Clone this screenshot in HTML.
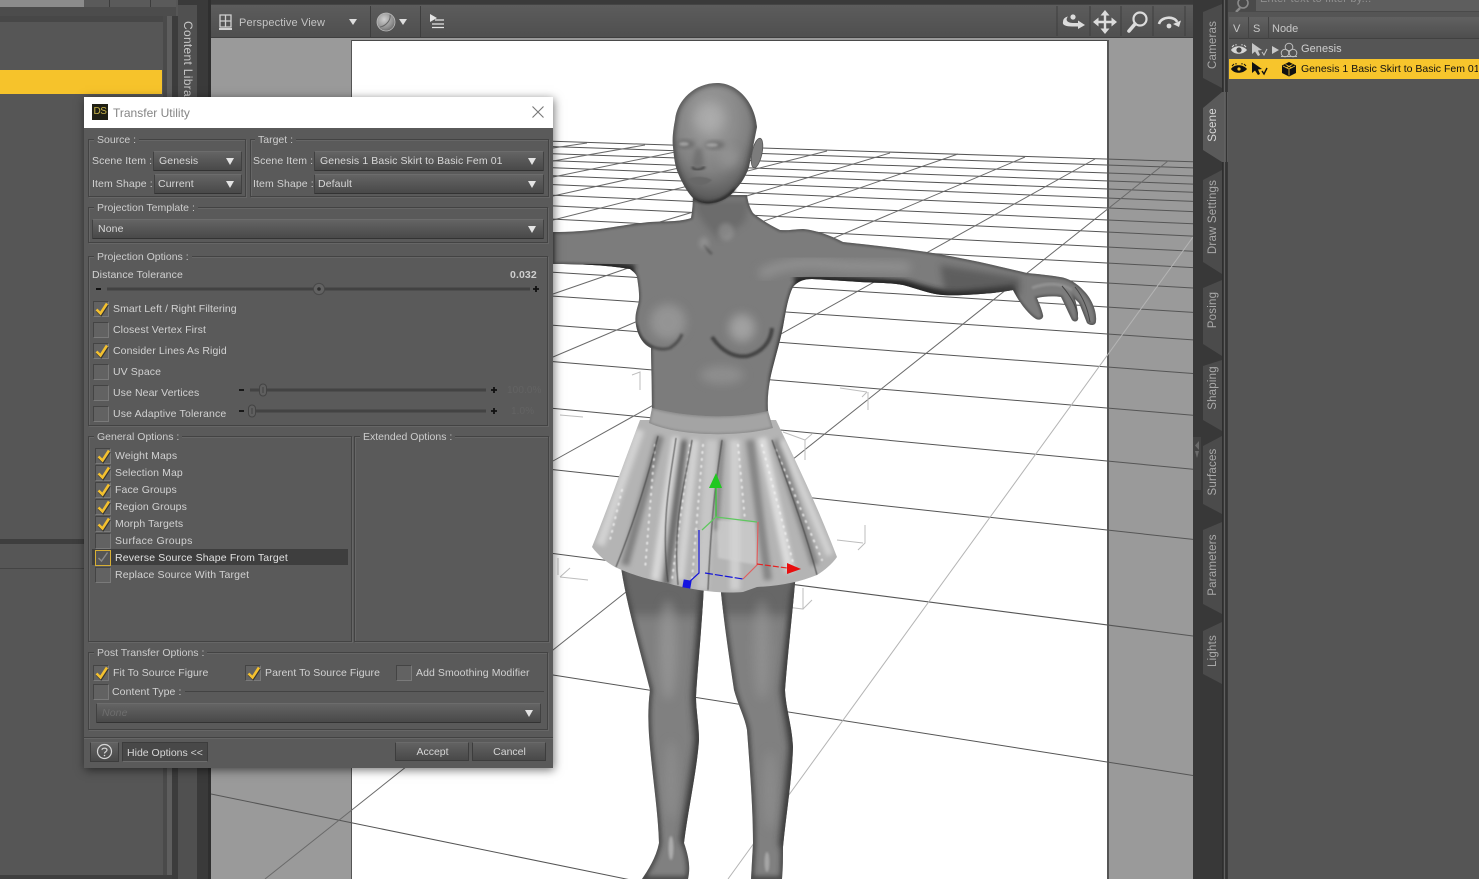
<!DOCTYPE html>
<html><head><meta charset="utf-8"><title>Transfer Utility</title>
<style>
html,body{margin:0;padding:0;width:1479px;height:879px;overflow:hidden;background:#3a3a3a}
body{position:relative;font-family:"Liberation Sans",sans-serif;font-size:11px;color:#cfcfcf}
.a{position:absolute}
.t{position:absolute;white-space:nowrap;line-height:14px;height:14px;margin-top:1px;font-size:10.5px;color:#d2d2d2;letter-spacing:.1px}
.g{position:absolute;border:1px solid #434343;box-shadow:1px 1px 0 #666,inset 1px 1px 0 #666;box-sizing:border-box}
.lg{position:absolute;white-space:nowrap;background:#5a5a5a;padding:0 3px;line-height:12px;height:12px;margin-top:1px;font-size:10.5px;color:#cdcdcd;letter-spacing:0}
.c{position:absolute;box-sizing:border-box;height:20px;background:linear-gradient(#646464,#494949);border:1px solid #414141;border-top-color:#6c6c6c;border-bottom-color:#333;border-radius:1px;line-height:18.5px;font-size:10.5px;color:#d8d8d8;padding-left:5px;white-space:nowrap;letter-spacing:.11px}
.c:after{content:"";position:absolute;right:7px;top:6px;border-left:4px solid transparent;border-right:4px solid transparent;border-top:7px solid #e4e4e4}
.b{position:absolute;width:16px;height:16px;box-sizing:border-box;border:1px solid #444;border-right-color:#7a7a7a;border-bottom-color:#7a7a7a;background:#626262}
.b svg{position:absolute;left:0;top:-1px;overflow:visible}
.btn{position:absolute;box-sizing:border-box;height:20px;background:linear-gradient(#626262,#494949);border:1px solid #3d3d3d;border-top-color:#6a6a6a;text-align:center;line-height:20px;color:#d6d6d6;font-size:10.5px}
.tab{position:absolute;white-space:nowrap;font-size:11.5px;color:#a9a9a9;line-height:14px;letter-spacing:.2px;transform:translate(-50%,-50%) rotate(-90deg)}
</style></head><body>

<!-- left panel -->
<div class="a" style="left:0;top:0;width:178px;height:879px;background:#565656"></div>
<div class="a" style="left:0;top:0;width:84px;height:7px;background:#8c8c8c"></div>
<div class="a" style="left:84px;top:0;width:92px;height:7px;background:#5a5a5a"></div>
<div class="a" style="left:109px;top:0;width:1px;height:7px;background:#3c3c3c"></div>
<div class="a" style="left:150px;top:0;width:1px;height:7px;background:#3c3c3c"></div>
<div class="a" style="left:0;top:7px;width:176px;height:9px;background:#4c4c4c"></div>
<div class="a" style="left:0;top:16px;width:163px;height:6px;background:#474747"></div>
<div class="a" style="left:163px;top:16px;width:4px;height:863px;background:#4a4a4a"></div>
<div class="a" style="left:167px;top:16px;width:5px;height:863px;background:#5e5e5e"></div>
<div class="a" style="left:172px;top:16px;width:6px;height:863px;background:#3c3c3c"></div>
<div class="a" style="left:0;top:70px;width:162px;height:24px;background:#f6c32b"></div>
<div class="a" style="left:0;top:539px;width:163px;height:5px;background:#3e3e3e"></div>
<div class="a" style="left:0;top:568px;width:163px;height:1px;background:#444"></div>
<div class="a" style="left:0;top:875px;width:172px;height:4px;background:#3f3f3f"></div>

<!-- tab strip left -->
<div class="a" style="left:178px;top:0;width:33px;height:879px;background:#3a3a3a"></div>
<div class="a" style="left:178px;top:5px;width:19px;height:874px;background:#505050"></div>
<div class="a" style="left:208px;top:0;width:3px;height:879px;background:#2f2f2f"></div>
<div class="a" style="left:188px;top:21px;white-space:nowrap;font-size:12px;color:#c8c8c8;line-height:14px;letter-spacing:.3px;transform-origin:0 0;transform:rotate(90deg) translate(0,-7px)">Content Library</div>

<!-- viewport -->
<div class="a" style="left:211px;top:0;width:982px;height:879px;background:#9a9a9a"></div>
<div class="a" style="left:352px;top:41px;width:755px;height:838px;background:#fff"></div>
<div class="a" style="left:351px;top:40px;width:757px;height:1px;background:#4a4a4a"></div>
<div class="a" style="left:351px;top:40px;width:1px;height:839px;background:#555"></div>
<div class="a" style="left:1107px;top:40px;width:2px;height:839px;background:#555"></div>

<!-- 3D scene -->
<svg class="a" style="left:0;top:0" width="1479" height="879" viewBox="0 0 1479 879">
<defs>
<clipPath id="vp"><rect x="211" y="38" width="982" height="841"/></clipPath>
<filter id="b0" x="-30%" y="-30%" width="160%" height="160%"><feGaussianBlur stdDeviation=".5"/></filter>
<filter id="b1" x="-30%" y="-30%" width="160%" height="160%"><feGaussianBlur stdDeviation="1"/></filter>
<filter id="b2" x="-30%" y="-30%" width="160%" height="160%"><feGaussianBlur stdDeviation="2.5"/></filter>
<filter id="b3" x="-30%" y="-30%" width="160%" height="160%"><feGaussianBlur stdDeviation="3.5"/></filter>
<filter id="b4" x="-50%" y="-50%" width="200%" height="200%"><feGaussianBlur stdDeviation="5"/></filter>
<path id="torso" d="M693 195C693 205 692 212 691 218C680 222 665 221 650 222C630 224 615 227 600 229C585 231 570 232 553 232L553 264C580 264 605 265 630 269C634 272 636 274 637 277C639 290 640 298 638 305C635 315 635 320 636 325C638 337 644 345 651 348C651 360 652 385 652 425L770 425C766 405 768 390 771 375C775 358 780 342 783 327C786 310 788 297 793 287C798 281 804 279 812 279C830 280 845 281 860 282C880 283 892 283 903 285C918 289 930 294 943 295C960 296 978 294 993 293C1000 292 1008 291 1013 290C1019 302 1028 314 1036 319C1040 321 1044 318 1043 315C1042 310 1039 303 1037 298C1045 296 1055 296 1061 297C1065 305 1069 314 1072 320C1075 323 1079 321 1078 317C1078 312 1077 306 1075 299L1079 303C1082 310 1085 318 1087 323C1090 326 1096 326 1096 321C1097 312 1092 299 1084 291C1077 283 1068 278 1060 277C1048 275 1037 274 1027 273C1015 270 1005 268 993 265C972 260 950 256 927 252C900 248 870 245 843 242C830 235 815 230 803 229C795 229 787 231 780 230C770 225 760 219 753 213C750 208 748 203 747 195Z"/>
<path id="head" d="M717 83C695 83 677 100 675 120C673 130 672 140 673 147C674 158 675 166 678 173C683 185 688 193 693 198C700 203 706 204 712 203C722 202 730 197 735 190C741 184 746 176 749 167L757 127C755 103 738 83 717 83Z"/>
<path id="legs" d="M620 560C625 600 640 650 650 690C648 705 648 720 649 735C652 775 658 810 659 843C656 858 648 870 642 879L688 879C690 870 690 860 684 843C688 810 697 770 699 740C699 725 696 710 696 697C698 660 703 620 705 560ZM718 560C722 610 728 650 734 690C738 705 745 718 747 730C750 770 753 810 753 843L751 879L782 879C783 868 783 858 783 847C786 815 792 780 793 747C792 725 786 710 785 690C788 650 793 610 797 560Z"/>
<path id="skirt" d="M640 420C625 460 607 510 592 547C598 555 606 562 615 567C632 575 650 580 667 583C690 590 720 594 743 592L757 587C780 586 800 582 817 575C825 570 832 564 837 557C815 500 795 460 776 420Z"/>
<path id="band" d="M652 408C690 418 735 419 768 411L773 428C740 437 680 437 649 423Z"/>
<clipPath id="cTorso"><use href="#torso"/></clipPath>
<clipPath id="cHead"><use href="#head"/></clipPath>
<clipPath id="cLegs"><use href="#legs"/></clipPath>
<clipPath id="cSkirt"><use href="#skirt"/></clipPath>
<clipPath id="cBand"><use href="#band"/></clipPath>
<radialGradient id="hg" cx=".45" cy=".3" r=".72"><stop offset="0" stop-color="#a2a2a2"/><stop offset=".6" stop-color="#828282"/><stop offset="1" stop-color="#505050"/></radialGradient>
</defs>
<g clip-path="url(#vp)">
<!-- cross grid lines -->
<g stroke="#555" stroke-width="1" fill="none">
<path d="M553 141.3L1193 161.8M553 146.6L1193 167.9M553 153.7L1193 176M553 160.7L1193 184.1M553 167.8L1193 192.3M553 175.8L1193 201.4M553 184.6L1193 211.6M553 195.2L1193 223.8M553 205.9L1193 236.1M553 219.1L1193 251.3M553 233.3L1193 267.6M553 251L1193 288M553 272.2L1193 312.4M553 296.1L1193 339.9M553 325.3L1193 373.5M553 361.6L1193 415.2M553 408.4L1193 469.2M553 469.6L1193 539.4M553 553.5L1193 636M553 675L1193 775.5M211 794L631 880"/>
</g>
<!-- depth grid lines -->
<g stroke="#6a6a6a" stroke-width="1" fill="none">
<path d="M1168 161L265 879M1095 159L553 461M1025 157L553 357M958 154L553 294M890 153L553 254M827 151L553 220M760 150L553 196M690 149L553 177M645 145L553 161M587 143L553 148"/>
</g>
<path d="M1193 237L728 879" stroke="#b4b4b4" fill="none"/>
<!-- ghost brackets -->
<g stroke="#bdbdbd" fill="none">
<path d="M840 388L867 392M868 392V410M867 392L862 397"/>
<path d="M783 432L805 440M805 440V460M805 440L812 434"/>
<path d="M837 540L863 543M865 525V543L858 550"/>
<path d="M770 605L803 609V588M803 609L812 600"/>
<path d="M560 577L588 580M560 577L570 568M558 558V575"/>
<path d="M560 415L583 417M632 375L640 372V390"/>
</g>

<!-- legs -->
<use href="#legs" fill="#808080"/>
<g clip-path="url(#cLegs)">
<use href="#legs" fill="none" stroke="#2c2c2c" stroke-width="5" filter="url(#b2)" opacity=".7"/>
<path d="M704 590L696 697L699 740L684 843M796 590L785 690L793 747L783 847" stroke="#333" stroke-width="10" fill="none" filter="url(#b3)" opacity=".6"/>
<rect x="620" y="560" width="180" height="55" fill="#4a4a4a" opacity=".45" filter="url(#b4)"/>
<ellipse cx="668" cy="650" rx="9" ry="50" fill="#a0a0a0" opacity=".55" filter="url(#b4)"/>
<ellipse cx="762" cy="650" rx="9" ry="50" fill="#9c9c9c" opacity=".5" filter="url(#b4)"/>
<ellipse cx="671" cy="780" rx="7" ry="40" fill="#a0a0a0" opacity=".35" filter="url(#b4)"/>
<ellipse cx="770" cy="790" rx="7" ry="40" fill="#a0a0a0" opacity=".35" filter="url(#b4)"/>
<ellipse cx="671" cy="848" rx="2.5" ry="12" fill="#c0c0c0" opacity=".7" filter="url(#b1)"/>
<ellipse cx="767" cy="862" rx="2.5" ry="10" fill="#c0c0c0" opacity=".6" filter="url(#b1)"/>
</g>

<!-- torso and arms -->
<ellipse cx="757" cy="153" rx="5" ry="15" fill="#7c7c7c" stroke="#555" stroke-width=".8" transform="rotate(12 757 153)"/>
<use href="#torso" fill="#7c7c7c"/>
<g clip-path="url(#cTorso)">
<use href="#torso" fill="none" stroke="#3a3a3a" stroke-width="3.5" filter="url(#b1)" opacity=".55"/>
<path d="M553 266C580 266 605 267 634 272" stroke="#222" stroke-width="15" fill="none" filter="url(#b2)" opacity=".9"/>
<path d="M795 283C810 280 860 284 903 287C918 291 930 296 943 297C960 298 978 296 1015 292" stroke="#222" stroke-width="15" fill="none" filter="url(#b2)" opacity=".9"/>
<path d="M940 265L1020 278L1020 295L945 292Z" fill="#4c4c4c" opacity=".6" filter="url(#b3)"/>
<path d="M760 275C785 262 810 262 835 265C870 268 890 265 910 268" stroke="#a2a2a2" stroke-width="10" fill="none" filter="url(#b4)" opacity=".6"/>
<path d="M692 200C696 212 700 222 720 240L745 222L750 200Z" fill="#5d5d5d" opacity=".5" filter="url(#b3)"/>
<path d="M704 245C708 250 709 252 712 254" stroke="#5c5c5c" stroke-width="2.5" fill="none" filter="url(#b1)"/>
<ellipse cx="726" cy="232" rx="8" ry="9" fill="#aaa" opacity=".4" filter="url(#b2)"/>
<ellipse cx="704" cy="243" rx="5" ry="6" fill="#aaa" opacity=".4" filter="url(#b2)"/>
<ellipse cx="668" cy="322" rx="18" ry="18" fill="#a2a2a2" opacity=".65" filter="url(#b4)"/>
<ellipse cx="742" cy="328" rx="13" ry="14" fill="#adadad" opacity=".75" filter="url(#b4)"/>
<path d="M712 337C722 352 735 358 748 356C762 352 771 342 772 328" stroke="#333" stroke-width="4" fill="none" filter="url(#b1)" opacity=".75"/>
<path d="M636 325C640 345 658 352 670 348C676 344 680 340 682 334" stroke="#3a3a3a" stroke-width="3" fill="none" filter="url(#b1)" opacity=".7"/>
<ellipse cx="722" cy="375" rx="22" ry="9" fill="#999" opacity=".65" filter="url(#b4)"/>
<path d="M793 287L780 335L770 380L782 380L806 287Z" fill="#383838" opacity=".85" filter="url(#b2)"/>
<path d="M1032 288C1045 283 1060 282 1072 290" stroke="#a4a4a4" stroke-width="3" fill="none" filter="url(#b1)" opacity=".6"/>
<path d="M1062 286C1070 295 1076 305 1079 318M1075 287C1083 297 1088 310 1090 322" stroke="#444" stroke-width="1" fill="none"/>
</g>

<!-- head -->
<use href="#head" fill="url(#hg)"/>
<g clip-path="url(#cHead)">
<use href="#head" fill="none" stroke="#333" stroke-width="4" filter="url(#b2)" opacity=".7"/>
<ellipse cx="709" cy="118" rx="15" ry="15" fill="#b4b4b4" opacity=".55" filter="url(#b4)"/>
<ellipse cx="686" cy="144" rx="9" ry="4" fill="#606060" opacity=".7" filter="url(#b2)"/>
<ellipse cx="715" cy="145" rx="10" ry="4" fill="#606060" opacity=".7" filter="url(#b2)"/>
<ellipse cx="684" cy="144" rx="5" ry="2" fill="#a0a0a0" filter="url(#b1)"/>
<ellipse cx="712" cy="145" rx="6" ry="2" fill="#a0a0a0" filter="url(#b1)"/>
<path d="M695 148L692 165L697 169L704 165L702 148" fill="#5f5f5f" opacity=".5" filter="url(#b2)"/>
<path d="M692 167C695 171 700 170 705 167" stroke="#3d3d3d" stroke-width="2" fill="none" filter="url(#b1)"/>
<path d="M687 179C696 176 705 176 712 180C705 187 694 187 687 179Z" fill="#686868" filter="url(#b0)"/>
<path d="M688 179.5H711" stroke="#404040" stroke-width="1" filter="url(#b0)"/>
<ellipse cx="730" cy="158" rx="10" ry="10" fill="#a5a5a5" opacity=".4" filter="url(#b4)"/>
</g>
<path d="M693 199C705 206 720 204 735 189" stroke="#222" stroke-width="2" fill="none" filter="url(#b1)" opacity=".8"/>

<!-- skirt -->
<use href="#skirt" fill="#b4b4b4"/>
<g clip-path="url(#cSkirt)">
<g fill="none" filter="url(#b2)">
<path d="M640 430L600 545" stroke="#d2d2d2" stroke-width="9"/>
<path d="M660 436L625 565" stroke="#818181" stroke-width="8"/>
<path d="M676 437L655 580" stroke="#d8d8d8" stroke-width="8"/>
<path d="M684 440L666 585" stroke="#696969" stroke-width="7"/>
<path d="M695 440L680 580" stroke="#d2d2d2" stroke-width="8"/>
<path d="M712 440L702 590" stroke="#c6c6c6" stroke-width="12"/>
<path d="M735 440L735 590" stroke="#cfcfcf" stroke-width="10"/>
<path d="M722 440L716 530" stroke="#777" stroke-width="4"/>
<path d="M750 440L768 580" stroke="#858585" stroke-width="8"/>
<path d="M762 438L790 572" stroke="#dcdcdc" stroke-width="9"/>
<path d="M776 440L815 565" stroke="#858585" stroke-width="8"/>
<path d="M782 440L830 555" stroke="#d2d2d2" stroke-width="7"/>
</g>
<g stroke-linecap="round" stroke-dasharray="1 6" stroke="#f4f4f4" stroke-width="2.2" fill="none" opacity=".7" filter="url(#b0)">
<path d="M655 445L645 570"/><path d="M690 445L672 580"/><path d="M738 445L745 520"/><path d="M762 445L795 570"/><path d="M776 450L822 560"/><path d="M703 445L692 580"/><path d="M622 490L610 540"/>
</g>
<g stroke="#3a3a3a" fill="none" stroke-width=".9" filter="url(#b0)">
<path d="M658 436C650 470 635 520 616 567"/>
<path d="M676 438C672 470 660 520 668 582"/>
<path d="M692 440C686 480 672 520 678 585"/>
<path d="M722 440C718 470 712 500 708 590"/>
<path d="M772 440C790 490 805 530 817 575"/>
</g>
<polygon points="717,520 755,522 757,565 718,558" fill="#d4d4d4" opacity=".6" filter="url(#b1)"/>
</g>
<use href="#band" fill="#a4a4a4"/>
<g clip-path="url(#cBand)"><use href="#band" fill="none" stroke="#7c7c7c" stroke-width="2.5" filter="url(#b1)" opacity=".6"/></g>

<!-- gizmo -->
<g fill="none" stroke-width="1.2">
<path d="M716 487V517" stroke="#32c832"/>
<path d="M716 517L757 522M716 517L702 530" stroke="#5fc85f"/>
<path d="M699 530V573L687 584" stroke="#1414d8"/>
<path d="M705 573L743 579" stroke="#1414d8" stroke-dasharray="8 2"/>
<path d="M743 579L757 565L758 522" stroke="#e06060"/>
<path d="M757 564L787 568" stroke="#e62020" stroke-dasharray="6 2"/>
</g>
<polygon points="716,473 709,488 722,488" fill="#20c820"/>
<polygon points="787,563 787,574 801,569" fill="#e80e0e"/>
<rect x="683" y="580" width="8" height="8" fill="#1414e0" transform="rotate(10 687 584)"/>
</g>
</svg>

<!-- viewport toolbar -->
<div class="a" style="left:211px;top:0;width:982px;height:4px;background:#3a3a3a"></div>
<div class="a" style="left:211px;top:4px;width:982px;height:34px;background:linear-gradient(#5c5c5c,#4f4f4f);border-top:1px solid #444;box-sizing:border-box;border-bottom:1px solid #3f3f3f"></div>
<div class="a" style="left:370px;top:6px;width:1px;height:31px;background:#3e3e3e"></div>
<div class="a" style="left:420px;top:6px;width:1px;height:31px;background:#3e3e3e"></div>
<div class="t" style="left:239px;top:15px;font-size:11px;color:#c4c4c4;letter-spacing:.12px">Perspective View</div>
<svg class="a" style="left:211px;top:4px" width="982" height="34" viewBox="211 4 982 34">
<g fill="none" stroke="#d0d0d0" stroke-width="1.3"><path d="M220 15H231V27H220ZM225.5 15V27M220 21H231"/><path d="M219 29H232" stroke-width="2"/></g>
<polygon points="349,19 357,19 353,25" fill="#dedede"/>
<defs><radialGradient id="sph" cx=".4" cy=".35" r=".7"><stop offset="0" stop-color="#cfcfcf"/><stop offset=".7" stop-color="#8f8f8f"/><stop offset="1" stop-color="#666"/></radialGradient></defs>
<circle cx="386" cy="22" r="9" fill="url(#sph)" stroke="#bbb" stroke-width=".8"/>
<path d="M380 27C386 26 391 20 390 15" stroke="#666" fill="none"/>
<polygon points="399,19 407,19 403,25" fill="#dedede"/>
<polygon points="430,14 430,22 437,18" fill="#e4e4e4"/>
<path d="M435 20H444M432 24H444M432 27.5H444" stroke="#e4e4e4" stroke-width="1.2"/>
<path d="M1057 6V36M1090 6V36M1121 6V36M1153 6V36M1185 6V36" stroke="#3e3e3e"/>
<g fill="#dcdcdc" stroke="#dcdcdc">
<circle cx="1073" cy="17" r="2.6" stroke="none"/>
<path d="M1063 22C1063 18 1066 17 1068 16.5C1065 20 1067 23 1074 23L1078 23L1078 20.5L1085 25L1078 29L1078 26.5L1072 26.5C1066 26.5 1062 25 1063 22Z" stroke="none"/>
<path d="M1105 15V29M1098 22H1112" stroke-width="2.4" fill="none"/>
<polygon points="1105,10 1100.5,15.5 1109.5,15.5" stroke="none"/><polygon points="1105,34 1100.5,28.5 1109.5,28.5" stroke="none"/><polygon points="1093,22 1098.5,17.5 1098.5,26.5" stroke="none"/><polygon points="1117,22 1111.5,17.5 1111.5,26.5" stroke="none"/>
<circle cx="1140" cy="19" r="6.5" fill="none" stroke-width="2.2"/>
<path d="M1135 24L1129 31" stroke-width="3.6" fill="none" stroke-linecap="round"/>
<path d="M1159 24C1161 16 1175 16 1177 22" fill="none" stroke-width="2.6"/>
<polygon points="1173,24 1181,20.5 1179,27" stroke="none"/>
<circle cx="1169" cy="26" r="2.4" stroke="none"/>
</g>
</svg>

<!-- right side tabs -->
<div class="a" style="left:1193px;top:0;width:35px;height:879px;background:#383838"></div>
<svg class="a" style="left:1193px;top:0" width="35" height="879" viewBox="1193 0 35 879">
<g fill="#4b4b4b">
<path d="M1222 4L1203 12V78L1222 88Z"/>
<path d="M1222 170L1203 180V262L1222 274Z"/>
<path d="M1222 280L1203 288V344L1222 356Z"/>
<path d="M1222 360L1203 366V420L1222 431Z"/>
<path d="M1222 436L1203 446V504L1222 514Z"/>
<path d="M1222 522L1203 530V604L1222 614Z"/>
<path d="M1222 622L1203 631V674L1222 684Z"/>
</g>
<path d="M1222 92L1203 108V150L1222 162L1228 162V92Z" fill="#5a5a5a"/>
<path d="M1193 437H1201V490H1193Z" fill="#434343"/>
<polygon points="1199,441 1199,450 1195,445.5" fill="#6a6a6a"/><polygon points="1195,451 1199,451 1197,458" fill="#6a6a6a"/>
<path d="M1222.5 0V92M1222.5 162V879" stroke="#2e2e2e"/>
<path d="M1224.5 0V879" stroke="#606060"/>
<path d="M1226.5 0V879" stroke="#333"/>
</svg>
<div class="tab" style="left:1213px;top:45px">Cameras</div>
<div class="tab" style="left:1213px;top:125px;color:#d8d8d8">Scene</div>
<div class="tab" style="left:1213px;top:217px">Draw Settings</div>
<div class="tab" style="left:1213px;top:310px">Posing</div>
<div class="tab" style="left:1213px;top:388px">Shaping</div>
<div class="tab" style="left:1213px;top:472px">Surfaces</div>
<div class="tab" style="left:1213px;top:565px">Parameters</div>
<div class="tab" style="left:1213px;top:651px">Lights</div>

<!-- scene panel -->
<div class="a" style="left:1228px;top:0;width:251px;height:879px;background:#555"></div>
<div class="a" style="left:1228px;top:0;width:251px;height:12px;background:#4a4a4a"></div>
<div class="a" style="left:1256px;top:0;width:223px;height:11px;background:#5e5e5e;overflow:hidden"><div style="position:absolute;left:4px;top:-8px;font-size:11px;line-height:14px;color:#909090;letter-spacing:.2px;white-space:nowrap">Enter text to filter by...</div></div>
<svg class="a" style="left:1228px;top:0" width="28" height="12"><path d="M12 8L8 12" stroke="#8a8a8a" stroke-width="2.4"/><circle cx="15" cy="3" r="5" stroke="#8a8a8a" stroke-width="1.6" fill="none"/></svg>
<div class="a" style="left:1229px;top:17px;width:250px;height:22px;background:linear-gradient(#616161,#4e4e4e);border-bottom:1px solid #414141;box-sizing:border-box"></div>
<div class="a" style="left:1248px;top:17px;width:1px;height:22px;background:#434343"></div>
<div class="a" style="left:1268px;top:17px;width:1px;height:22px;background:#434343"></div>
<div class="t" style="left:1233px;top:21px;font-size:11px;color:#c8c8c8">V</div>
<div class="t" style="left:1253px;top:21px;font-size:11px;color:#c8c8c8">S</div>
<div class="t" style="left:1272px;top:21px;font-size:11px;color:#c8c8c8;letter-spacing:0">Node</div>
<div class="t" style="left:1301px;top:41px;font-size:11px;color:#cfcfcf;letter-spacing:.05px">Genesis</div>
<div class="a" style="left:1229px;top:59px;width:250px;height:20px;background:#f7c52c"></div>
<div class="t" style="left:1301px;top:61px;font-size:10.5px;color:#111;letter-spacing:0;width:177px;overflow:hidden">Genesis 1 Basic Skirt to Basic Fem 01</div>
<svg class="a" style="left:1229px;top:40px" width="72" height="42" viewBox="1229 39 72 42">
<g>
<path d="M1231 49C1234 44 1243 44 1247 49C1243 54 1234 54 1231 49Z" fill="#d5d5d5"/><circle cx="1239" cy="49" r="2.6" fill="#444"/><path d="M1232 46L1234 44M1236 44.5V43M1242 44.5V43M1246 46L1244 44" stroke="#d5d5d5"/>
<polygon points="1252,42 1252,53 1255,50.5 1258,55 1260,54 1258,49.5 1262,49" fill="#c6c6c6"/><path d="M1262 51L1264 54L1267 48" stroke="#c6c6c6" fill="none"/>
<polygon points="1272,45 1272,53 1279,49" fill="#c8c8c8"/>
<g fill="none" stroke="#bdbdbd"><circle cx="1289" cy="46" r="3.8"/><circle cx="1285" cy="52" r="3.8"/><circle cx="1293" cy="52" r="3.8"/><path d="M1281 55.5H1297"/></g>
</g>
<g transform="translate(0,-1)">
<path d="M1231 69C1234 64 1243 64 1247 69C1243 74 1234 74 1231 69Z" fill="#111"/><circle cx="1239" cy="69" r="1.6" fill="#f7c52c"/><path d="M1232 66L1234 64M1236 64.5V63M1242 64.5V63M1246 66L1244 64" stroke="#111"/>
<polygon points="1252,62 1252,73 1255,70.5 1258,75 1260,74 1258,69.5 1262,69" fill="#111"/><path d="M1262 71L1264 74L1267 68" stroke="#111" fill="none" stroke-width="1.4"/>
<path d="M1289 62L1296 65.5V73L1289 76.5L1282 73V65.5Z" fill="#111"/><path d="M1283 66L1289 69L1295 66M1289 69V75.5M1285.5 64.5L1292 68M1292.5 64.5L1286 68" stroke="#f7c52c" stroke-width=".8" fill="none"/>
</g>
</svg>

<!-- dialog -->
<div class="a" style="left:84px;top:97px;width:469px;height:671px;background:#5a5a5a;box-shadow:1px 2px 9px rgba(0,0,0,.55)">
<div class="a" style="left:0;top:0;width:469px;height:31px;background:#fff"></div>
</div>
<div class="a" style="left:92px;top:104px;width:16px;height:16px;background:#1f1f14;color:#c9b54a;font-size:10px;line-height:15px;text-align:center;letter-spacing:-.5px">DS</div>
<div class="t" style="left:113px;top:105px;font-size:12px;color:#858585;letter-spacing:0">Transfer Utility</div>
<svg class="a" style="left:532px;top:106px" width="12" height="12"><path d="M.5.5L11.5 11.5M11.5.5L.5 11.5" stroke="#777" stroke-width="1.1"/></svg>

<!-- groups -->
<div class="g" style="left:88px;top:139px;width:158px;height:58px"></div>
<div class="lg" style="left:94px;top:133px">Source :</div>
<div class="g" style="left:250px;top:139px;width:299px;height:58px"></div>
<div class="lg" style="left:255px;top:133px">Target :</div>
<div class="t" style="left:92px;top:153px">Scene Item :</div>
<div class="c" style="left:153px;top:151px;width:89px">Genesis</div>
<div class="t" style="left:92px;top:176px">Item Shape :</div>
<div class="c" style="left:154px;top:174px;width:88px;padding-left:3px">Current</div>
<div class="t" style="left:253px;top:153px">Scene Item :</div>
<div class="c" style="left:314px;top:151px;width:230px">Genesis 1 Basic Skirt to Basic Fem 01</div>
<div class="t" style="left:253px;top:176px">Item Shape :</div>
<div class="c" style="left:314px;top:174px;width:230px;padding-left:3px">Default</div>

<div class="g" style="left:88px;top:207px;width:460px;height:36px"></div>
<div class="lg" style="left:94px;top:201px">Projection Template :</div>
<div class="c" style="left:92px;top:219px;width:452px">None</div>

<div class="g" style="left:88px;top:256px;width:460px;height:170px"></div>
<div class="lg" style="left:94px;top:250px">Projection Options :</div>
<div class="t" style="left:92px;top:267px">Distance Tolerance</div>
<div class="t" style="left:510px;top:267px;font-weight:bold;color:#cfcfcf;font-size:10.5px">0.032</div>

<svg class="a" style="left:88px;top:280px" width="460" height="140" viewBox="88 280 460 140">
<path d="M96 289H101" stroke="#111" stroke-width="2"/>
<path d="M107 289H530" stroke="#424242" stroke-width="3"/>
<path d="M533 289H539M536 286V292" stroke="#111" stroke-width="1.8"/>
<circle cx="319" cy="289" r="5.6" fill="#626262" stroke="#484848"/><circle cx="319" cy="289" r="1.8" fill="#2e2e2e"/>
<path d="M239 390H244" stroke="#111" stroke-width="1.8"/>
<path d="M250 390H486" stroke="#434343" stroke-width="3"/>
<path d="M491 390H497M494 387V393" stroke="#111" stroke-width="1.8"/>
<rect x="259.5" y="384" width="7" height="12" rx="3.5" fill="#5f5f5f" stroke="#434343"/><path d="M263 387V393" stroke="#404040"/>
<path d="M239 411H244" stroke="#111" stroke-width="1.8"/>
<path d="M250 411H486" stroke="#434343" stroke-width="3"/>
<path d="M491 411H497M494 408V414" stroke="#111" stroke-width="1.8"/>
<rect x="248.5" y="405" width="7" height="12" rx="3.5" fill="#5f5f5f" stroke="#434343"/><path d="M252 408V414" stroke="#404040"/>
</svg>
<div class="t" style="left:507px;top:383px;color:#636363;font-size:10px">100.0%</div>
<div class="t" style="left:511px;top:404px;color:#636363;font-size:10px">1.0%</div>

<!-- projection checks -->
<div class="b" style="left:93px;top:301px"><svg width="16" height="16"><path d="M2.5 8.5L6.5 12.5L13 2.5" fill="none" stroke="#333" stroke-width="3" transform="translate(.5 1)"/><path d="M2.5 8.5L6.5 12.5L13 2.5" fill="none" stroke="#f3c02f" stroke-width="2.6"/></svg></div>
<div class="t" style="left:113px;top:301px;letter-spacing:.06px">Smart Left / Right Filtering</div>
<div class="b" style="left:93px;top:322px"></div>
<div class="t" style="left:113px;top:322px">Closest Vertex First</div>
<div class="b" style="left:93px;top:343px"><svg width="16" height="16"><path d="M2.5 8.5L6.5 12.5L13 2.5" fill="none" stroke="#333" stroke-width="3" transform="translate(.5 1)"/><path d="M2.5 8.5L6.5 12.5L13 2.5" fill="none" stroke="#f3c02f" stroke-width="2.6"/></svg></div>
<div class="t" style="left:113px;top:343px">Consider Lines As Rigid</div>
<div class="b" style="left:93px;top:364px"></div>
<div class="t" style="left:113px;top:364px">UV Space</div>
<div class="b" style="left:93px;top:385px"></div>
<div class="t" style="left:113px;top:385px">Use Near Vertices</div>
<div class="b" style="left:93px;top:406px"></div>
<div class="t" style="left:113px;top:406px;letter-spacing:.15px">Use Adaptive Tolerance</div>

<!-- general -->
<div class="g" style="left:88px;top:436px;width:264px;height:206px"></div>
<div class="lg" style="left:94px;top:430px">General Options :</div>
<div class="g" style="left:354px;top:436px;width:195px;height:206px"></div>
<div class="lg" style="left:360px;top:430px">Extended Options :</div>
<div class="a" style="left:92px;top:549px;width:256px;height:16px;background:#3e3e3e"></div>

<div class="b" style="left:95px;top:448px"><svg width="16" height="16"><path d="M2.5 8.5L6.5 12.5L13 2.5" fill="none" stroke="#333" stroke-width="3" transform="translate(.5 1)"/><path d="M2.5 8.5L6.5 12.5L13 2.5" fill="none" stroke="#f3c02f" stroke-width="2.6"/></svg></div>
<div class="t" style="left:115px;top:448px">Weight Maps</div>
<div class="b" style="left:95px;top:465px"><svg width="16" height="16"><path d="M2.5 8.5L6.5 12.5L13 2.5" fill="none" stroke="#333" stroke-width="3" transform="translate(.5 1)"/><path d="M2.5 8.5L6.5 12.5L13 2.5" fill="none" stroke="#f3c02f" stroke-width="2.6"/></svg></div>
<div class="t" style="left:115px;top:465px">Selection Map</div>
<div class="b" style="left:95px;top:482px"><svg width="16" height="16"><path d="M2.5 8.5L6.5 12.5L13 2.5" fill="none" stroke="#333" stroke-width="3" transform="translate(.5 1)"/><path d="M2.5 8.5L6.5 12.5L13 2.5" fill="none" stroke="#f3c02f" stroke-width="2.6"/></svg></div>
<div class="t" style="left:115px;top:482px">Face Groups</div>
<div class="b" style="left:95px;top:499px"><svg width="16" height="16"><path d="M2.5 8.5L6.5 12.5L13 2.5" fill="none" stroke="#333" stroke-width="3" transform="translate(.5 1)"/><path d="M2.5 8.5L6.5 12.5L13 2.5" fill="none" stroke="#f3c02f" stroke-width="2.6"/></svg></div>
<div class="t" style="left:115px;top:499px">Region Groups</div>
<div class="b" style="left:95px;top:516px"><svg width="16" height="16"><path d="M2.5 8.5L6.5 12.5L13 2.5" fill="none" stroke="#333" stroke-width="3" transform="translate(.5 1)"/><path d="M2.5 8.5L6.5 12.5L13 2.5" fill="none" stroke="#f3c02f" stroke-width="2.6"/></svg></div>
<div class="t" style="left:115px;top:516px">Morph Targets</div>
<div class="b" style="left:95px;top:533px"></div>
<div class="t" style="left:115px;top:533px;letter-spacing:.3px">Surface Groups</div>
<div class="b" style="left:95px;top:550px;border:1px solid #d8b035;background:#555"><svg width="14" height="14"><path d="M2.5 8L5.5 11L11.5 2.5" fill="none" stroke="#8a8a8a" stroke-width="1.4"/></svg></div>
<div class="t" style="left:115px;top:550px;color:#e2e2e2;letter-spacing:.16px">Reverse Source Shape From Target</div>
<div class="b" style="left:95px;top:567px"></div>
<div class="t" style="left:115px;top:567px;letter-spacing:.14px">Replace Source With Target</div>

<!-- post -->
<div class="g" style="left:88px;top:652px;width:460px;height:78px"></div>
<div class="lg" style="left:94px;top:646px">Post Transfer Options :</div>
<div class="b" style="left:93px;top:665px"><svg width="16" height="16"><path d="M2.5 8.5L6.5 12.5L13 2.5" fill="none" stroke="#333" stroke-width="3" transform="translate(.5 1)"/><path d="M2.5 8.5L6.5 12.5L13 2.5" fill="none" stroke="#f3c02f" stroke-width="2.6"/></svg></div>
<div class="t" style="left:113px;top:665px;letter-spacing:.05px">Fit To Source Figure</div>
<div class="b" style="left:245px;top:665px"><svg width="16" height="16"><path d="M2.5 8.5L6.5 12.5L13 2.5" fill="none" stroke="#333" stroke-width="3" transform="translate(.5 1)"/><path d="M2.5 8.5L6.5 12.5L13 2.5" fill="none" stroke="#f3c02f" stroke-width="2.6"/></svg></div>
<div class="t" style="left:265px;top:665px;letter-spacing:.06px">Parent To Source Figure</div>
<div class="b" style="left:396px;top:665px"></div>
<div class="t" style="left:416px;top:665px;letter-spacing:.07px">Add Smoothing Modifier</div>
<div class="a" style="left:185px;top:691px;width:359px;height:1px;background:#434343"></div>
<div class="b" style="left:93px;top:684px"></div>
<div class="t" style="left:112px;top:684px">Content Type :</div>
<div class="c" style="left:96px;top:703px;width:445px;color:#6e6e6e;font-style:italic">None</div>

<!-- footer -->
<div class="a" style="left:84px;top:737px;width:469px;height:1px;background:#434343"></div>
<div class="a" style="left:84px;top:738px;width:469px;height:1px;background:#666"></div>
<div class="btn" style="left:90px;top:742px;width:29px;height:20px"></div>
<svg class="a" style="left:96px;top:743px" width="17" height="17"><circle cx="8.5" cy="8.5" r="7" fill="none" stroke="#d6d6d6" stroke-width="1.2"/><path d="M6 6.8C6 4.6 11 4.6 11 7C11 8.8 8.5 8.6 8.5 10.5" fill="none" stroke="#d6d6d6" stroke-width="1.2"/><circle cx="8.5" cy="12.5" r=".8" fill="#d6d6d6"/></svg>
<div class="btn" style="left:122px;top:742px;width:86px;height:20px;background:#484848;border-color:#3c3c3c #3c3c3c #6c6c6c #3c3c3c">Hide Options &lt;&lt;</div>
<div class="btn" style="left:395px;top:742px;width:74px;height:19px;line-height:18px;padding-left:1px">Accept</div>
<div class="btn" style="left:472px;top:742px;width:74px;height:19px;line-height:18px;padding-left:1px">Cancel</div>

</body></html>
